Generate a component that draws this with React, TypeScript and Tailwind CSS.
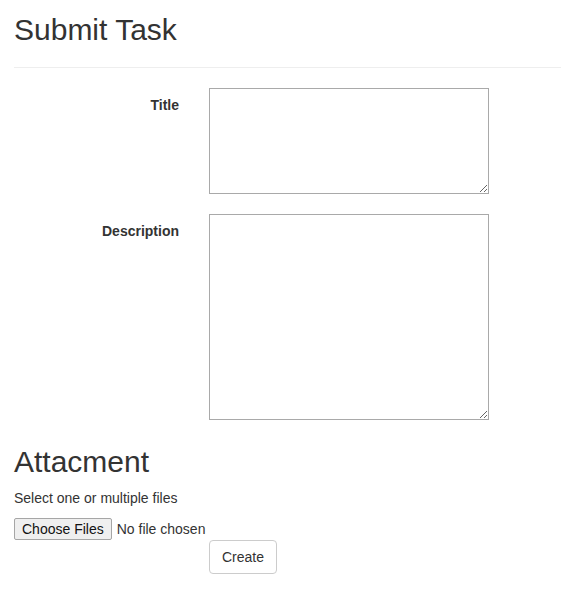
export default function App() {
  return (
    <div className="pl-[14px] text-[14px] leading-[20px] text-[#333] font-['Liberation_Sans',Arial,sans-serif]">
      <h1 className="mt-[10px] mb-[10px] text-[30px] leading-[40px]">Submit Task</h1>
      <hr className="mt-[17px] mb-[20px] border-t border-[#eee]" />
      <form className="flex flex-col gap-[20px]">
        <div className="flex">
          <label className="w-[165px] pt-[7px] text-right font-bold">Title</label>
          <textarea className="ml-[30px] w-[280px] h-[106px] border border-[#a9a9a9] resize" />
        </div>
        <div className="flex">
          <label className="w-[165px] pt-[7px] text-right font-bold">Description</label>
          <textarea className="ml-[30px] w-[280px] h-[206px] border border-[#a9a9a9] resize" />
        </div>
      </form>
      <h2 className="mt-[25px] mb-[10px] text-[30px] leading-[33px]">Attacment</h2>
      <p className="mb-[10px]">Select one or multiple files</p>
      <input
        type="file"
        multiple
        className="block h-[22px] text-[14px] file:mr-[5px] file:h-[22px] file:px-[7px] file:border file:border-[#a6a6a6] file:rounded-[2px] file:bg-[#efefef] file:text-[#111]"
      />
      <div className="pl-[195px]">
        <button className="px-[12px] py-[6px] border border-[#ccc] rounded-[4px] bg-white text-[#333]">Create</button>
      </div>
    </div>
  );
}
